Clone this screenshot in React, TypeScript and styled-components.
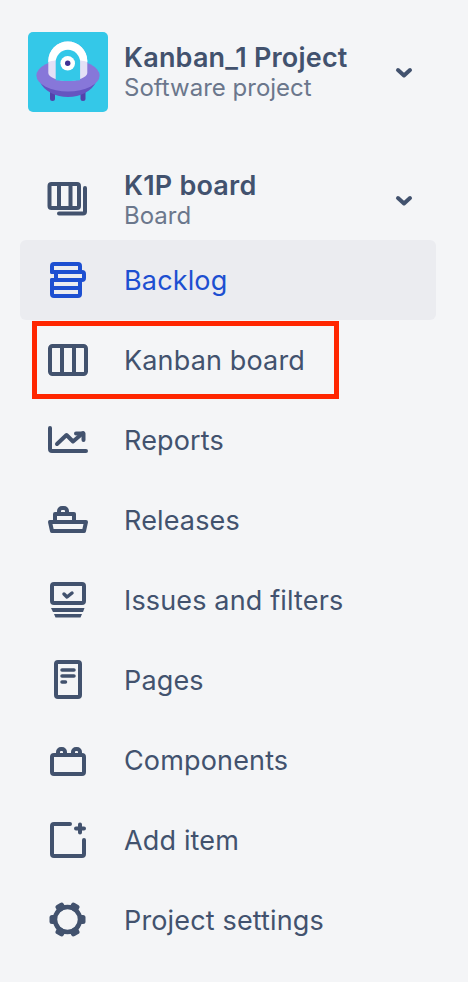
import * as React from "react";
import styled, { createGlobalStyle } from "styled-components";

const GlobalStyle = createGlobalStyle`
  html, body {
    margin: 0;
    padding: 0;
    background: #ffffff;
  }
`;

const Sidebar = styled.nav`
  width: 468px;
  height: 982px;
  box-sizing: border-box;
  padding: 32px 32px 0 20px;
  background: #f4f5f7;
  font-family: Inter, "Noto Sans", sans-serif;
  color: #42526e;
  overflow: hidden;
`;

const ProjectHeader = styled.header`
  display: flex;
  align-items: center;
  height: 80px;
  padding-left: 8px;
`;

const Avatar = styled.svg`
  width: 80px;
  height: 80px;
  flex: none;
  margin-right: 16px;
`;

const TitleBlock = styled.div`
  flex: 1;
  display: flex;
  flex-direction: column;
  padding-top: 2px;
`;

const Title = styled.div`
  font-size: 27px;
  line-height: 30px;
  font-weight: 600;
  letter-spacing: 0.2px;
`;

const Subtitle = styled.div`
  font-size: 24px;
  line-height: 30px;
  color: #6b778c;
`;

const BoardRow = styled.div`
  display: flex;
  align-items: center;
  height: 80px;
  margin-top: 48px;
`;

const Row = styled.div<{ $active?: boolean }>`
  position: relative;
  display: flex;
  align-items: center;
  height: 80px;
  border-radius: 6px;
  font-size: 27px;
  letter-spacing: 0.15px;
  background: ${(p) => (p.$active ? "#ebecf0" : "transparent")};
  color: ${(p) => (p.$active ? "#1d4fd1" : "#42526e")};
`;

const IconSlot = styled.span`
  width: 104px;
  flex: none;
  display: flex;
  justify-content: flex-start;
  padding-left: 26px;
  box-sizing: border-box;
`;

const Icon = styled.svg`
  width: 44px;
  height: 44px;
  display: block;
`;

const Chevron = styled.svg`
  width: 20px;
  height: 14px;
  flex: none;
  margin: 2px 22px 0 0;
`;

const Highlight = styled.span`
  position: absolute;
  left: 12px;
  top: 1px;
  width: 307px;
  height: 78px;
  box-sizing: border-box;
  border: 5px solid #ff2600;
`;

const stroke = {
  fill: "none",
  stroke: "currentColor",
  strokeWidth: 4,
  strokeLinejoin: "round" as const,
  strokeLinecap: "round" as const,
};

function Ufo() {
  return (
    <Avatar viewBox="0 0 80 80">
      <rect width="80" height="80" rx="5" fill="#34c8e8" />
      <rect x="22" y="58" width="5" height="11" rx="2.5" fill="#5243aa" />
      <rect x="52.500" y="58" width="5" height="11" rx="2.5" fill="#5243aa" />
      <path d="M12 50c4 9 16 15 28 15s24-6 28-15z" fill="#6554c0" />
      <ellipse cx="40" cy="43.500" rx="31.600" ry="16" fill="#8777d9" />
      <path d="M20.300 29a19.500 19.500 0 0 1 39 0v12c0 4-9 8-19.500 8s-19.500-4-19.500-8z" fill="#e4e0f6" />
      <path d="M20.300 29a19.500 19.500 0 0 1 39 0v1c-6-3-33-3-39 0z" fill="#ffffff" />
      <path d="M27.700 30a12.200 12.200 0 0 1 24.400 0v18.200c-7 1-17.400 1-24.400 0z" fill="#34c8e8" />
      <circle cx="39.700" cy="31.300" r="7.300" fill="#ffffff" />
      <circle cx="39.700" cy="31.300" r="2.700" fill="#403294" />
    </Avatar>
  );
}

const DownArrow = () => (
  <Chevron viewBox="0 0 20 14">
    <path d="M4 4l6 5.500L16 4" fill="none" stroke="#42526e" strokeWidth="4" strokeLinecap="round" strokeLinejoin="round" />
  </Chevron>
);

const BoardsIcon = () => (
  <Icon viewBox="0 0 44 44" {...stroke}>
    <rect x="3.500" y="6" width="29.500" height="24" rx="2" />
    <path d="M13 6v24M24.500 6v24" />
    <path d="M39 10v23.500a2 2 0 0 1-2 2H13" />
  </Icon>
);

const BacklogIcon = () => (
  <Icon viewBox="0 0 44 44" {...stroke}>
    <path d="M6 14V8a2 2 0 0 1 2-2h24a2 2 0 0 1 2 2v6" />
    <path d="M6 14h30a2 2 0 0 1 2 2v4a2 2 0 0 1-2 2H6M10 14v8" />
    <path d="M6 22v14a2 2 0 0 0 2 2h24a2 2 0 0 0 2-2V22" />
    <path d="M6 30h28" />
  </Icon>
);

const KanbanIcon = () => (
  <Icon viewBox="0 0 44 44" {...stroke}>
    <rect x="4" y="8" width="36" height="28" rx="2.500" />
    <path d="M16 8v28M28 8v28" />
  </Icon>
);

const ReportsIcon = () => (
  <Icon viewBox="0 0 44 44" {...stroke}>
    <path d="M4 10v21a2 2 0 0 0 2 2h34" />
    <path d="M11 26l9.500-9 6.500 6.500 10-8.500" />
    <path d="M30 15.500h7.500V22" />
  </Icon>
);

const ReleasesIcon = () => (
  <Icon viewBox="0 0 44 44" {...stroke}>
    <path d="M4 24h36l-2 9H6z" />
    <path d="M9 24v-8h19v8" />
    <path d="M13 16v-3a3 3 0 0 1 3-3h2a3 3 0 0 1 3 3v3" />
  </Icon>
);

const IssuesIcon = () => (
  <Icon viewBox="0 0 44 44" {...stroke}>
    <rect x="6" y="6" width="32" height="19" rx="2" />
    <path d="M18 16l3 3 5-4" strokeWidth="3.500" />
    <path d="M5 30h33.500l-1.500 4H7zM8 36h28l-1.500 3.500h-25z" fill="currentColor" stroke="none" />
  </Icon>
);

const PagesIcon = () => (
  <Icon viewBox="0 0 44 44" {...stroke}>
    <rect x="10" y="4" width="24" height="35" rx="2" />
    <path d="M16 12h12M16 18h12M16 24h3.500" strokeWidth="3.500" />
  </Icon>
);

const ComponentsIcon = () => (
  <Icon viewBox="0 0 44 44" {...stroke}>
    <rect x="6" y="17" width="32" height="19" rx="2" />
    <path d="M12 17v-3a3 3 0 0 1 3-3h1a3 3 0 0 1 3 3v3M27 17v-3a3 3 0 0 1 3-3h1a3 3 0 0 1 3 3v3" />
  </Icon>
);

const AddIcon = () => (
  <Icon viewBox="0 0 44 44" {...stroke}>
    <path d="M24 6H8a2 2 0 0 0-2 2v28a2 2 0 0 0 2 2h28a2 2 0 0 0 2-2V22" />
    <path d="M34 6.500v8M30 10.500h8" />
  </Icon>
);

const GearIcon = () => (
  <Icon viewBox="0 0 44 44">
    <circle cx="21.500" cy="21.500" r="12.500" fill="none" stroke="currentColor" strokeWidth="4.500" />
    {[0, 60, 120, 180, 240, 300].map((deg) => (
      <rect
        key={deg}
        x="32"
        y="17"
        width="7.500"
        height="9"
        rx="2.500"
        fill="currentColor"
        transform={`rotate(${deg} 21.500 21.500)`}
      />
    ))}
  </Icon>
);

const items = [
  { name: "Backlog", icon: <BacklogIcon />, active: true },
  { name: "Kanban board", icon: <KanbanIcon />, outlined: true },
  { name: "Reports", icon: <ReportsIcon /> },
  { name: "Releases", icon: <ReleasesIcon /> },
  { name: "Issues and filters", icon: <IssuesIcon /> },
  { name: "Pages", icon: <PagesIcon /> },
  { name: "Components", icon: <ComponentsIcon /> },
  { name: "Add item", icon: <AddIcon /> },
  { name: "Project settings", icon: <GearIcon /> },
];

export default function App(): React.ReactElement {
  return (
    <>
      <GlobalStyle />
      <Sidebar>
        <ProjectHeader>
          <Ufo />
          <TitleBlock>
            <Title>Kanban_1 Project</Title>
            <Subtitle>Software project</Subtitle>
          </TitleBlock>
          <DownArrow />
        </ProjectHeader>
        <BoardRow>
          <IconSlot>
            <BoardsIcon />
          </IconSlot>
          <TitleBlock>
            <Title>K1P board</Title>
            <Subtitle>Board</Subtitle>
          </TitleBlock>
          <DownArrow />
        </BoardRow>
        {items.map((item) => (
          <Row key={item.name} $active={item.active}>
            <IconSlot>{item.icon}</IconSlot>
            {item.name}
            {item.outlined && <Highlight />}
          </Row>
        ))}
      </Sidebar>
    </>
  );
}
